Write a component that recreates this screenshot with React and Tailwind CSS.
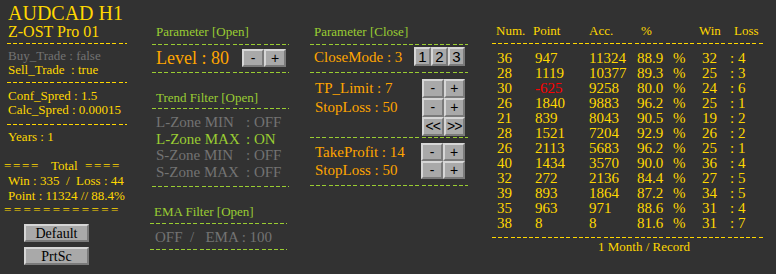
const rows = [
  ['36', '947', '11324', '88.9', '32', '4'],
  ['28', '1119', '10377', '89.3', '25', '3'],
  ['30', '-625', '9258', '80.0', '24', '6'],
  ['26', '1840', '9883', '96.2', '25', '1'],
  ['21', '839', '8043', '90.5', '19', '2'],
  ['28', '1521', '7204', '92.9', '26', '2'],
  ['26', '2113', '5683', '96.2', '25', '1'],
  ['40', '1434', '3570', '90.0', '36', '4'],
  ['32', '272', '2136', '84.4', '27', '5'],
  ['39', '893', '1864', '87.2', '34', '5'],
  ['35', '963', '971', '88.6', '31', '4'],
  ['38', '8', '8', '81.6', '31', '7'],
];

const GoldDash = ({ className }) => (
  <div className={`h-px bg-[image:repeating-linear-gradient(90deg,#ffd700_0_4px,transparent_4px_6.2px)] ${className}`} />
);

const GreenDash = ({ className }) => (
  <div className={`h-px bg-[image:repeating-linear-gradient(90deg,#9acd32_0_4px,transparent_4px_6.2px)] ${className}`} />
);

const Btn = ({ children, className }) => (
  <div className={`flex items-center justify-center bg-[#a9a9a9] border-2 border-t-[#d6d6d6] border-l-[#d6d6d6] border-b-[#7a7a7a] border-r-[#7a7a7a] text-black ${className}`}>
    {children}
  </div>
);

const SmallBtn = ({ children, className }) => (
  <Btn className={`font-['Liberation_Sans',sans-serif] text-[14px] leading-none ${className}`}>{children}</Btn>
);

const App = () => {
  return (
    <div className="w-[776px] h-[274px] bg-[#323232] flex overflow-hidden font-['Liberation_Serif',serif] whitespace-pre">
      {/* left: symbol + totals */}
      <div className="w-[150px] pl-[8px] pt-[2px] flex flex-col text-[#ffd700]">
        <div className="h-[22px] leading-[22px] text-[20px]">AUDCAD H1</div>
        <div className="h-[16px] leading-[16px] text-[16px]">Z-OST Pro 01</div>
        <GoldDash className="mt-[3px] -ml-[1px] w-[120px]" />
        <div className="mt-[5px] h-[14px] leading-[14px] text-[13px] text-[#737373]">Buy_Trade : false</div>
        <div className="h-[14px] leading-[14px] text-[13px]">Sell_Trade  : true</div>
        <GoldDash className="mt-[5px] -ml-[1px] w-[120px]" />
        <div className="mt-[6px] h-[14px] leading-[14px] text-[13px]">Conf_Spred : 1.5</div>
        <div className="h-[14px] leading-[14px] text-[13px]">Calc_Spred : 0.00015</div>
        <GoldDash className="mt-[7px] -ml-[1px] w-[120px]" />
        <div className="mt-[5px] h-[14px] leading-[14px] text-[13px]">Years : 1</div>

        <div className="mt-[14px] h-[15px] leading-[15px] text-[13px] flex -ml-[4px]">
          <span className="w-[47px] tracking-[1.7px]">====</span>
          <span className="w-[34px]">Total</span>
          <span className="tracking-[1.7px]">====</span>
        </div>
        <div className="h-[15px] leading-[15px] text-[13px]">Win : 335  /  Loss : 44</div>
        <div className="h-[15px] leading-[15px] text-[13px]">Point : 11324 // 88.4%</div>
        <div className="h-[14px] leading-[14px] text-[13px] -ml-[4px] tracking-[2.4px]">============</div>

        <Btn className="mt-[7px] ml-[16px] w-[65px] h-[18px] text-[14px]">Default</Btn>
        <Btn className="mt-[5px] ml-[16px] w-[65px] h-[18px] text-[14px]">PrtSc</Btn>
      </div>

      {/* parameter open */}
      <div className="w-[160px] pt-[25px] flex flex-col">
        <div className="pl-[6px] h-[14px] leading-[14px] text-[13px] text-[#9acd32]">Parameter [Open]</div>
        <GreenDash className="mt-[5px] ml-[2px] w-[137px]" />
        <div className="mt-[3px] h-[20px] flex items-center pl-[6px]">
          <span className="w-[86px] text-[18px] leading-[20px] text-[#ffa500]">Level : 80</span>
          <SmallBtn className="w-[22px] h-[18px]">-</SmallBtn>
          <SmallBtn className="w-[22px] h-[18px]">+</SmallBtn>
        </div>
        <GreenDash className="mt-[4px] ml-[2px] w-[137px]" />

        <div className="mt-[18px] pl-[6px] h-[14px] leading-[14px] text-[13px] text-[#9acd32]">Trend Filter [Open]</div>
        <GreenDash className="mt-[3px] ml-[2px] w-[137px]" />
        <div className="mt-[5px] flex flex-col pl-[6px] text-[15px]">
          <div className="h-[16.5px] leading-[16.5px] flex text-[#737373]"><span className="w-[90px]">L-Zone MIN</span>: OFF</div>
          <div className="h-[16.5px] leading-[16.5px] flex text-[#9acd32]"><span className="w-[90px]">L-Zone MAX</span>: ON</div>
          <div className="h-[16.5px] leading-[16.5px] flex text-[#737373]"><span className="w-[90px]">S-Zone MIN</span>: OFF</div>
          <div className="h-[16.5px] leading-[16.5px] flex text-[#737373]"><span className="w-[90px]">S-Zone MAX</span>: OFF</div>
        </div>
        <GreenDash className="mt-[6px] ml-[2px] w-[137px]" />

        <div className="mt-[18px] pl-[4px] h-[14px] leading-[14px] text-[13px] text-[#9acd32]">EMA Filter [Open]</div>
        <GreenDash className="mt-[4px] w-[137px]" />
        <div className="mt-[5px] pl-[5px] h-[16px] leading-[16px] text-[15px] text-[#737373]">OFF  /   EMA : 100</div>
        <GreenDash className="mt-[4px] w-[137px]" />
      </div>

      {/* parameter close */}
      <div className="w-[182px] pt-[25px] flex flex-col">
        <div className="pl-[4px] h-[14px] leading-[14px] text-[13px] text-[#9acd32]">Parameter [Close]</div>
        <GreenDash className="mt-[5px] w-[158px]" />
        <div className="mt-[2px] h-[19px] flex items-center">
          <span className="pl-[4px] w-[104px] pt-[2px] text-[15px] leading-[17px] text-[#ffa500]">CloseMode : 3</span>
          <SmallBtn className="w-[17px] h-[19px] text-[15px]">1</SmallBtn>
          <SmallBtn className="w-[17px] h-[19px] text-[15px]">2</SmallBtn>
          <SmallBtn className="w-[17px] h-[19px] text-[15px]">3</SmallBtn>
        </div>
        <GreenDash className="mt-[6px] w-[158px]" />

        <div className="mt-[5.5px] flex">
          <div className="pl-[5px] w-[112px] flex flex-col text-[15px] text-[#ffa500]">
            <div className="h-[19px] leading-[19px]">TP_Limit : 7</div>
            <div className="h-[19px] leading-[19px]">StopLoss : 50</div>
          </div>
          <div className="grid grid-cols-2 w-[43px]">
            <SmallBtn className="h-[19px]">-</SmallBtn>
            <SmallBtn className="h-[19px]">+</SmallBtn>
            <SmallBtn className="h-[19px]">-</SmallBtn>
            <SmallBtn className="h-[19px]">+</SmallBtn>
            <SmallBtn className="h-[19px] text-[12px] tracking-[-1px]">{'<<'}</SmallBtn>
            <SmallBtn className="h-[19px] text-[12px] tracking-[-1px]">{'>>'}</SmallBtn>
          </div>
        </div>
        <GreenDash className="mt-[1.5px] w-[158px]" />

        <div className="mt-[5px] flex">
          <div className="pl-[5px] w-[111px] flex flex-col text-[15px] text-[#ffa500]">
            <div className="h-[18px] leading-[18px]">TakeProfit : 14</div>
            <div className="h-[18px] leading-[18px]">StopLoss : 50</div>
          </div>
          <div className="grid grid-cols-2 w-[44px]">
            <SmallBtn className="h-[18px]">-</SmallBtn>
            <SmallBtn className="h-[18px]">+</SmallBtn>
            <SmallBtn className="h-[18px]">-</SmallBtn>
            <SmallBtn className="h-[18px]">+</SmallBtn>
          </div>
        </div>
        <GreenDash className="mt-[6px] w-[158px]" />
      </div>

      {/* monthly records */}
      <div className="flex-1 pt-[24px] flex flex-col text-[#ffd700]">
        <div className="pl-[4px] h-[14px] leading-[14px] text-[13px] flex">
          <span className="w-[37px]">Num.</span>
          <span className="w-[56px]">Point</span>
          <span className="w-[52px]">Acc.</span>
          <span className="w-[58px]">%</span>
          <span className="w-[35px]">Win</span>
          <span>Loss</span>
        </div>
        <GoldDash className="mt-[5px] w-[271px]" />
        <div className="mt-[6.5px] flex flex-col pl-[5px] text-[15px]">
          {rows.map((r, i) => (
            <div key={i} className="h-[15px] leading-[15px] grid grid-cols-[38px_54px_48px_36px_29px_28px_1fr]">
              <span>{r[0]}</span>
              <span className={r[1].startsWith('-') ? 'text-[#ff0000]' : ''}>{r[1]}</span>
              <span>{r[2]}</span>
              <span>{r[3]}</span>
              <span>%</span>
              <span>{r[4]}</span>
              <span>: {r[5]}</span>
            </div>
          ))}
        </div>
        <GoldDash className="mt-[6.5px] w-[271px]" />
        <div className="mt-[2px] pl-[106px] h-[14px] leading-[14px] text-[13px]">1 Month / Record</div>
      </div>
    </div>
  );
};

export default App;
